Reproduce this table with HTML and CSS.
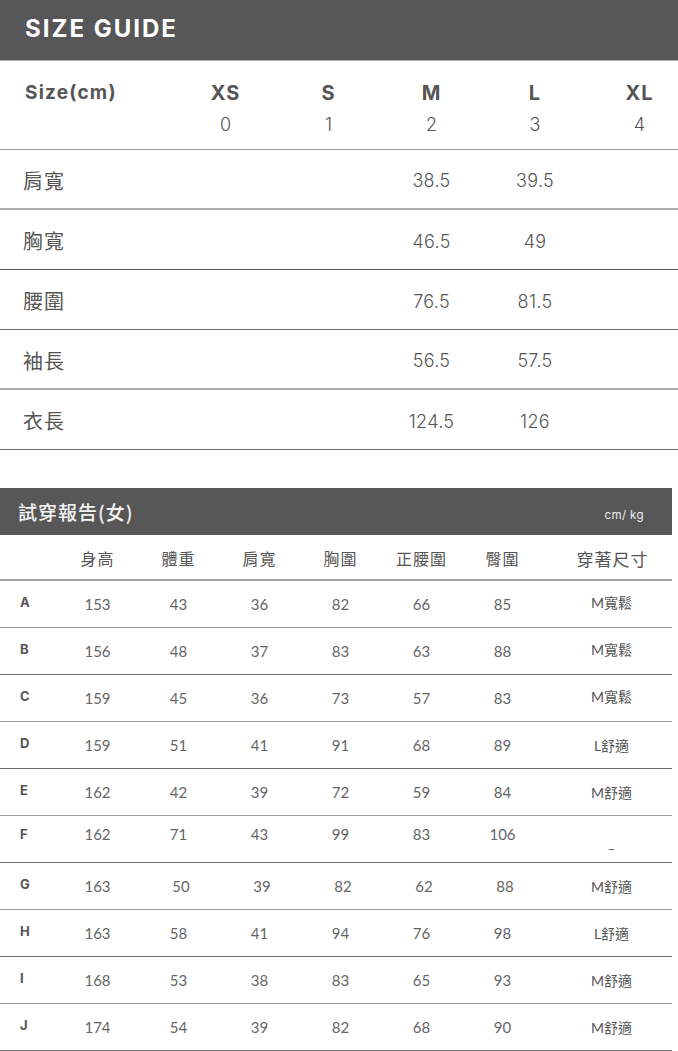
FILE: index.html
```html
<!DOCTYPE html>
<html lang="zh-Hant">
<head>
<meta charset="utf-8">
<title>Size Guide</title>
<link rel="stylesheet" href="styles.css">
</head>
<body>
<section class="guide">
  <header class="bar"><h1 class="bar-title">SIZE GUIDE</h1></header>
  <div class="sg-head">
    <div class="sg-label">Size(cm)</div>
    <div class="sg-size">XS<span class="sg-num">0</span></div>
    <div class="sg-size">S<span class="sg-num">1</span></div>
    <div class="sg-size">M<span class="sg-num">2</span></div>
    <div class="sg-size">L<span class="sg-num">3</span></div>
    <div class="sg-size sg-last">XL<span class="sg-num">4</span></div>
  </div>
  <div class="sg-row l1"><div class="sg-name">肩寬</div><div></div><div></div><div class="sg-val">38.5</div><div class="sg-val">39.5</div><div></div></div>
  <div class="sg-row l2"><div class="sg-name">胸寬</div><div></div><div></div><div class="sg-val">46.5</div><div class="sg-val">49</div><div></div></div>
  <div class="sg-row l3"><div class="sg-name">腰圍</div><div></div><div></div><div class="sg-val">76.5</div><div class="sg-val">81.5</div><div></div></div>
  <div class="sg-row l1"><div class="sg-name">袖長</div><div></div><div></div><div class="sg-val">56.5</div><div class="sg-val">57.5</div><div></div></div>
  <div class="sg-row l3"><div class="sg-name">衣長</div><div></div><div></div><div class="sg-val">124.5</div><div class="sg-val">126</div><div></div></div>
</section>

<section class="report">
  <header class="rp-bar"><h2 class="rp-title">試穿報告(女)</h2><span class="rp-unit">cm/ kg</span></header>
  <div class="rp-row rp-head">
    <div></div><div>身高</div><div>體重</div><div>肩寬</div><div>胸圍</div><div>正腰圍</div><div>臀圍</div><div class="rp-fit">穿著尺寸</div>
  </div>
  <div class="rp-row"><div class="rp-id">A</div><div>153</div><div>43</div><div>36</div><div>82</div><div>66</div><div>85</div><div class="rp-fit up">M寬鬆</div></div>
  <div class="rp-row"><div class="rp-id">B</div><div>156</div><div>48</div><div>37</div><div>83</div><div>63</div><div>88</div><div class="rp-fit up">M寬鬆</div></div>
  <div class="rp-row"><div class="rp-id">C</div><div>159</div><div>45</div><div>36</div><div>73</div><div>57</div><div>83</div><div class="rp-fit up">M寬鬆</div></div>
  <div class="rp-row"><div class="rp-id">D</div><div>159</div><div>51</div><div>41</div><div>91</div><div>68</div><div>89</div><div class="rp-fit">L舒適</div></div>
  <div class="rp-row"><div class="rp-id">E</div><div>162</div><div>42</div><div>39</div><div>72</div><div>59</div><div>84</div><div class="rp-fit">M舒適</div></div>
  <div class="rp-row rp-f"><div class="rp-id">F</div><div>162</div><div>71</div><div>43</div><div>99</div><div>83</div><div>106</div><div class="rp-fit rp-dash">_</div></div>
  <div class="rp-row"><div class="rp-id">G</div><div>163</div><div class="sh">50</div><div class="sh">39</div><div class="sh">82</div><div class="sh">62</div><div class="sh">88</div><div class="rp-fit">M舒適</div></div>
  <div class="rp-row"><div class="rp-id">H</div><div>163</div><div>58</div><div>41</div><div>94</div><div>76</div><div>98</div><div class="rp-fit">L舒適</div></div>
  <div class="rp-row"><div class="rp-id">I</div><div>168</div><div>53</div><div>38</div><div>83</div><div>65</div><div>93</div><div class="rp-fit">M舒適</div></div>
  <div class="rp-row"><div class="rp-id">J</div><div>174</div><div>54</div><div>39</div><div>82</div><div>68</div><div>90</div><div class="rp-fit">M舒適</div></div>
</section>
</body>
</html>
```

FILE: styles.css
```css
* { box-sizing: border-box; }
html, body { margin: 0; padding: 0; background: #fff; }
body {
  width: 678px;
  font-family: "Lato", "Noto Sans CJK TC", sans-serif;
  color: #555;
}
h1, h2 { margin: 0; }

/* ---------- size guide ---------- */
.bar {
  height: 61px;
  background: #575757;
  border-bottom: 1px solid #b5b5b5;
  display: flex;
  align-items: center;
  padding-left: 25px;
}
.bar-title {
  color: #fff;
  font-family: "Inter", sans-serif;
  font-weight: 700;
  font-size: 24px;
  letter-spacing: 2px;
  line-height: 1;
  padding-bottom: 2px;
}

.sg-head,
.sg-row {
  display: grid;
  grid-template-columns: 174px 103px 103px 103px 104px 1fr;
  border-bottom: 1px solid #9a9a9a;
}
.sg-head {
  height: 89px;
  padding-top: 20px;
}
.sg-label {
  padding-left: 25px;
  font-family: "Inter", sans-serif;
  font-weight: 700;
  font-size: 19px;
  letter-spacing: 1.2px;
  line-height: 24px;
  color: #555;
}
.sg-size {
  display: flex;
  flex-direction: column;
  align-items: center;
  gap: 8px;
  font-family: "Inter", sans-serif;
  font-weight: 700;
  font-size: 20px;
  letter-spacing: 1px;
  line-height: 24px;
  color: #555;
}
.sg-last { padding-left: 14px; }
.sg-num {
  font-weight: 300;
  font-size: 18px;
  letter-spacing: 0;
  color: #555;
}

.sg-row {
  height: 60px;
  align-items: center;
}
.sg-row.l1 { border-bottom: 2px solid #adadad; }
.sg-row.l2 { border-bottom: 1px solid #5a5a5a; }
.sg-row.l3 { border-bottom: 1px solid #6a6a6a; }
.sg-name {
  padding-left: 23px;
  font-family: "Noto Sans CJK TC", sans-serif;
  font-weight: 400;
  font-size: 20px;
  letter-spacing: 1px;
  color: #555;
  padding-top: 2px;
}
.sg-val {
  text-align: center;
  font-family: "Inter", sans-serif;
  font-size: 18px;
  font-weight: 300;
  letter-spacing: 0.3px;
  color: #555;
  padding-top: 3px;
}

/* ---------- report ---------- */
.report {
  margin-top: 38px;
  width: 672px;
}
.rp-bar {
  height: 47px;
  background: #575757;
  display: flex;
  align-items: center;
  justify-content: space-between;
  padding: 0 28px 0 18px;
}
.rp-title {
  font-family: "Noto Sans CJK TC", sans-serif;
  font-weight: 500;
  font-size: 19px;
  letter-spacing: 1px;
  color: #f4f4f4;
}
.rp-unit {
  font-family: "Inter", sans-serif;
  font-size: 11.5px;
  letter-spacing: 0.4px;
  color: #f0f0f0;
  padding-top: 6px;
}

.rp-row {
  display: grid;
  grid-template-columns: 57px repeat(6, 81px) 1fr;
  align-items: center;
  height: 47px;
  border-bottom: 1px solid #6d6d6d;
  text-align: center;
  font-size: 15px;
  color: #666;
  font-weight: 400;
}
.rp-row:nth-child(odd) { border-bottom-color: #9c9c9c; }
.rp-head {
  height: 46px;
  font-family: "Noto Sans CJK TC", sans-serif;
  font-size: 16px;
  color: #555;
  letter-spacing: 1px;
  border-bottom: 2px solid #a5a5a5;
}
.rp-head > div { padding-top: 2px; }
.rp-fit { padding-left: 8px; }
.rp-row .rp-fit:not(.rp-head .rp-fit) {
  font-family: "Lato", "Noto Sans CJK TC", sans-serif;
  font-size: 14px;
  color: #555;
}
.rp-head .rp-fit { font-size: 17px; padding-left: 10px; }
.rp-fit.up { padding-bottom: 4px; }
.rp-id {
  text-align: left;
  padding-left: 20px;
  font-family: "Inter", sans-serif;
  font-weight: 700;
  font-size: 13px;
  color: #555;
  padding-bottom: 4px;
}
.rp-f > div { padding-bottom: 10px; }
.rp-f > .rp-dash { padding-bottom: 0; padding-top: 6px; }
.sh { padding-left: 5px; }
```
